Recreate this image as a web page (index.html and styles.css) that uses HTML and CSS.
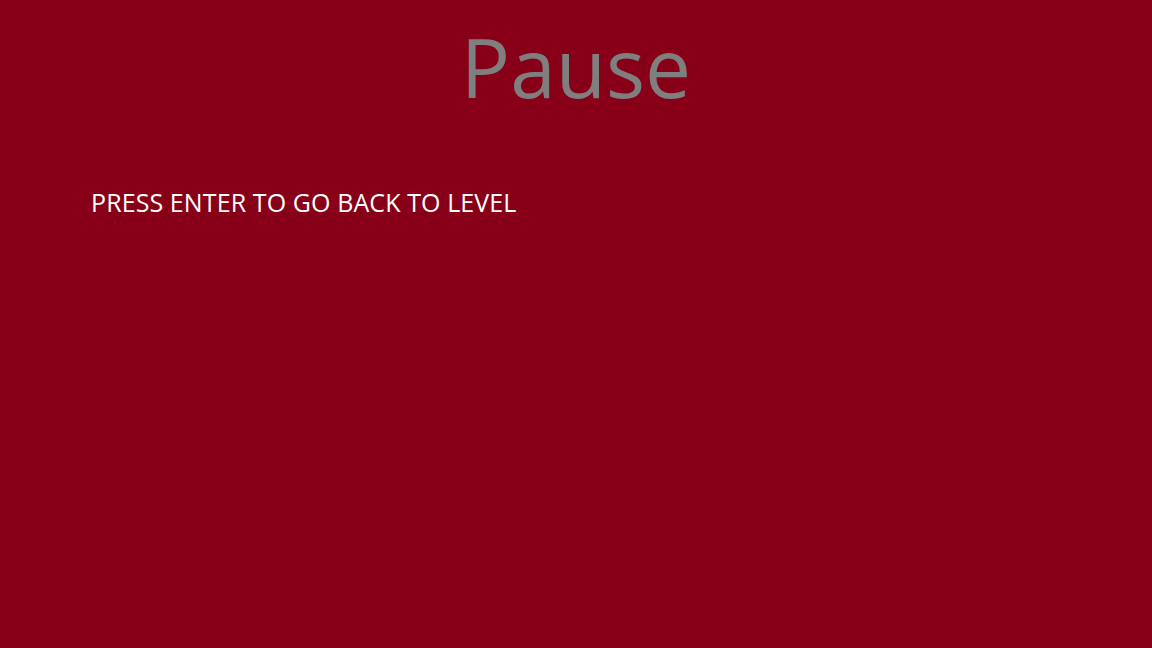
FILE: index.html
```html
<!DOCTYPE html>
<html>
<head>
<meta charset="utf-8">
<link rel="stylesheet" href="styles.css">
</head>
<body>
<main class="slide">
  <h1 class="title">Pause</h1>
  <p class="body-text">PRESS ENTER TO GO BACK TO LEVEL</p>
</main>
</body>
</html>
```
FILE: styles.css
```css
html, body {
  margin: 0;
  padding: 0;
  width: 1152px;
  height: 648px;
  overflow: hidden;
  background: #880017;
}
.slide {
  width: 1152px;
  height: 648px;
  box-sizing: border-box;
  padding: 11px 0 0 91px;
  display: flex;
  flex-direction: column;
  font-family: "Open Sans", "Liberation Sans", sans-serif;
}
.title {
  margin: 0 0 0 -91px;
  text-align: center;
  font-weight: 400;
  font-size: 82px;
  line-height: 110px;
  color: #7f7f7f;
}
.body-text {
  margin: 65px 0 0 0;
  font-size: 25px;
  line-height: 32px;
  letter-spacing: 0.1px;
  color: #ffffff;
}
```
